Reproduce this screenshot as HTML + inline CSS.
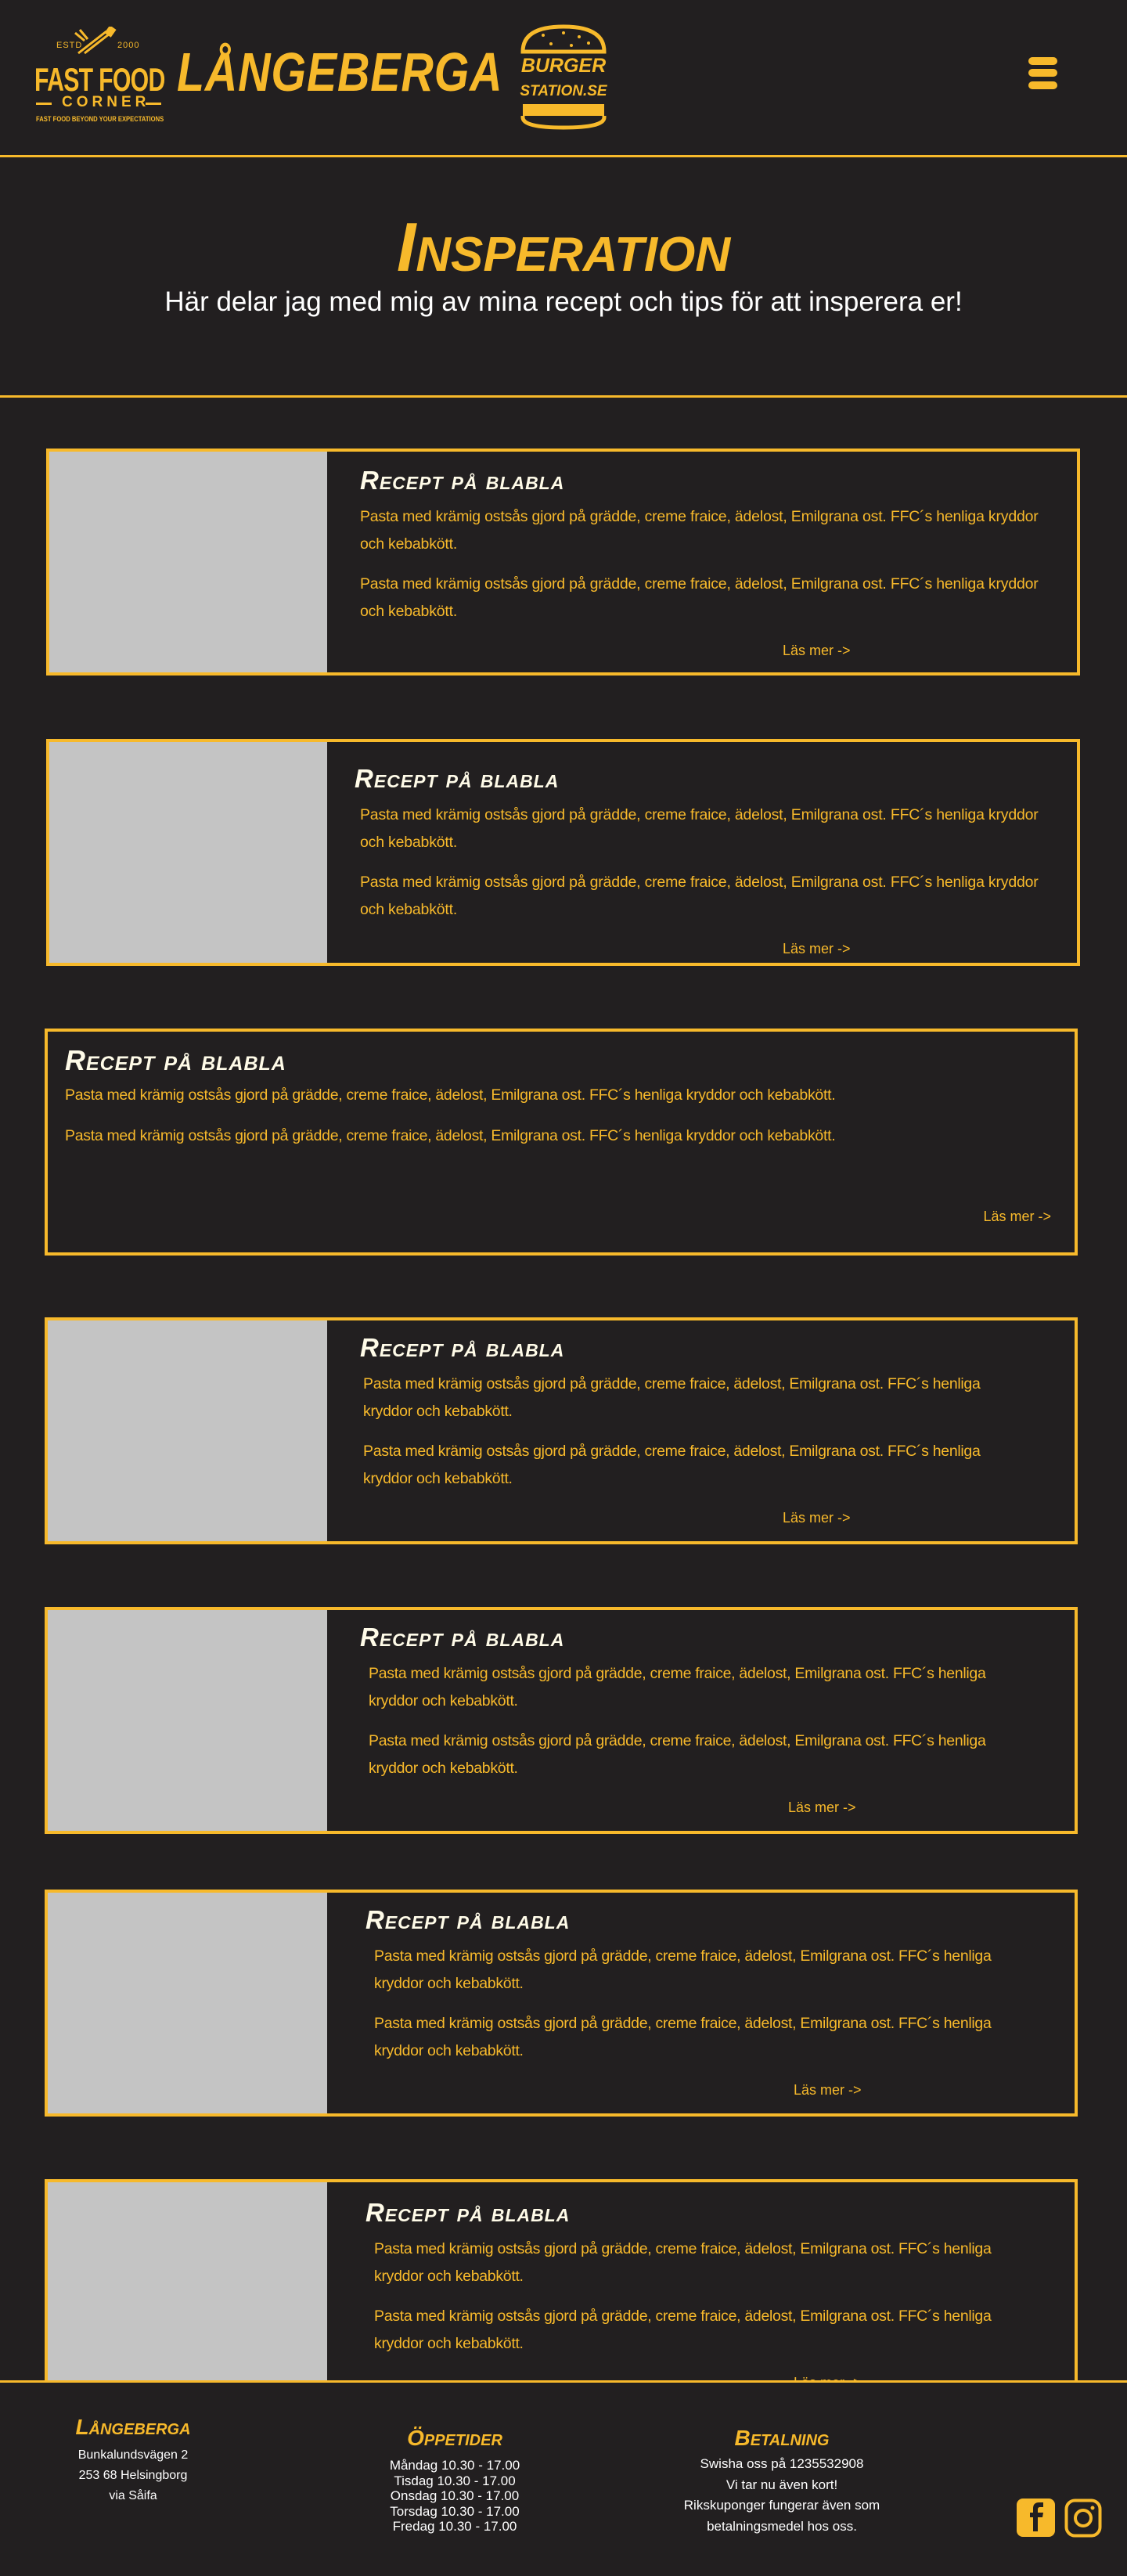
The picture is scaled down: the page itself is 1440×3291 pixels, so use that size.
<!DOCTYPE html>
<html><head><meta charset="utf-8">
<style>
*{margin:0;padding:0;box-sizing:border-box}
body{width:1440px;height:3291px;background:#221f20;position:relative;overflow:hidden;font-family:"Liberation Sans",sans-serif}
.a{position:absolute}
.y{color:#f7b92b}
.hl{position:absolute;left:0;width:1440px;height:3px;background:#f7b92b}
.card{position:absolute;left:59px;width:1321px;height:290px;border:4px solid #f7b92b;overflow:hidden}
.img{position:absolute;left:0;top:0;bottom:0;width:355px;background:#c4c4c4}
.h{position:absolute;color:#fffbe8;font-weight:bold;font-style:italic;font-variant:small-caps;font-size:33px;letter-spacing:1px;white-space:nowrap}
.p{position:absolute;color:#f7b92b;font-size:19.5px;line-height:35px;letter-spacing:-0.3px}
.w1{width:870px;letter-spacing:-0.2px}
.lm{position:absolute;color:#f7b92b;font-size:18px}
.ft{position:absolute;text-align:center;color:#fff;font-size:16px}
.fh{color:#f7b92b;font-weight:bold;font-style:italic;font-variant:small-caps;font-size:28px;margin-bottom:14px}
</style></head><body>

<div class="a y" style="left:72px;top:52px;font-size:11px;letter-spacing:1px">ESTD</div>
<div class="a y" style="left:150px;top:52px;font-size:11px;letter-spacing:1px">2000</div>
<svg class="a" style="left:92px;top:34px" width="60" height="36" viewBox="0 0 60 36"><g stroke="#f7b92b" stroke-width="3" fill="none"><path d="M8 34L44 6M16 34L52 6"/><path d="M4 8l12 10M10 4l10 12"/></g><rect x="44" y="0" width="10" height="12" fill="#f7b92b" transform="rotate(35 49 6)"/></svg>
<div class="a y" style="left:44px;top:78px;font-size:42px;font-weight:bold;transform:scaleX(.72);transform-origin:left;white-space:nowrap;letter-spacing:-1px">FAST FOOD</div>
<div class="a" style="left:46px;top:131px;width:20px;height:3px;background:#f7b92b"></div>
<div class="a" style="left:186px;top:131px;width:20px;height:3px;background:#f7b92b"></div>
<div class="a y" style="left:79px;top:120px;font-size:19px;font-weight:bold;letter-spacing:5px">CORNER</div>
<div class="a y" style="left:46px;top:147px;font-size:9px;font-weight:bold;white-space:nowrap;transform:scaleX(.85);transform-origin:left">FAST FOOD BEYOND YOUR EXPECTATIONS</div>
<div class="a y" style="left:226px;top:52px;font-size:70px;font-weight:bold;font-style:italic;white-space:nowrap;transform:scaleX(.82);transform-origin:left;letter-spacing:1px;line-height:80px">LÅNGEBERGA</div>
<svg class="a" style="left:664px;top:30px" width="112" height="136" viewBox="0 0 112 136"><path d="M4 36 Q4 4 56 4 Q108 4 108 36 L108 36 Z" fill="none" stroke="#f7b92b" stroke-width="5"/><path d="M4 36h104" stroke="#f7b92b" stroke-width="5"/><g fill="#f7b92b"><circle cx="30" cy="15" r="2"/><circle cx="56" cy="12" r="2"/><circle cx="76" cy="17" r="2"/><circle cx="40" cy="26" r="2"/><circle cx="66" cy="28" r="2"/><circle cx="88" cy="25" r="2"/></g><rect x="4" y="103" width="104" height="15" fill="#f7b92b"/><path d="M4 118v2 Q4 133 56 133 Q108 133 108 120v-2" fill="none" stroke="#f7b92b" stroke-width="5"/><text x="56" y="62" text-anchor="middle" font-family="Liberation Sans" font-weight="bold" font-style="italic" font-size="25" fill="#f7b92b">BURGER</text><text x="56" y="92" text-anchor="middle" font-family="Liberation Sans" font-weight="bold" font-style="italic" font-size="19" fill="#f7b92b">STATION.SE</text></svg>
<div class="a" style="left:1314px;top:73px;width:37px;height:10px;border-radius:5px;background:#f7b92b"></div>
<div class="a" style="left:1314px;top:88px;width:37px;height:10px;border-radius:5px;background:#f7b92b"></div>
<div class="a" style="left:1314px;top:104px;width:37px;height:10px;border-radius:5px;background:#f7b92b"></div>

<div class="hl" style="top:198px"></div>
<div class="a y" style="left:0;width:1440px;top:266px;text-align:center;font-size:88px;font-weight:bold;font-style:italic;font-variant:small-caps;line-height:100px">Insperation</div>
<div class="a" style="left:0;width:1440px;top:366px;text-align:center;font-size:35px;color:#fff">Här delar jag med mig av mina recept och tips för att insperera er!</div>
<div class="hl" style="top:505px"></div>

<div class="card" style="top:573px"><div class="img"></div>
<div class="h" style="left:397px;top:18px">Recept på blabla</div>
<div class="p w1" style="left:397px;top:66px">Pasta med krämig ostsås gjord på grädde, creme fraice, ädelost, Emilgrana ost. FFC´s henliga kryddor och kebabkött.</div>
<div class="p w1" style="left:397px;top:152px">Pasta med krämig ostsås gjord på grädde, creme fraice, ädelost, Emilgrana ost. FFC´s henliga kryddor och kebabkött.</div>
<div class="lm" style="left:937px;top:244px">Läs mer -&gt;</div></div>

<div class="card" style="top:944px"><div class="img"></div>
<div class="h" style="left:390px;top:28px">Recept på blabla</div>
<div class="p w1" style="left:397px;top:76px">Pasta med krämig ostsås gjord på grädde, creme fraice, ädelost, Emilgrana ost. FFC´s henliga kryddor och kebabkött.</div>
<div class="p w1" style="left:397px;top:162px">Pasta med krämig ostsås gjord på grädde, creme fraice, ädelost, Emilgrana ost. FFC´s henliga kryddor och kebabkött.</div>
<div class="lm" style="left:937px;top:254px">Läs mer -&gt;</div></div>

<div class="card" style="top:1314px;left:57px;width:1320px">
<div class="h" style="left:22px;top:16px;font-size:36px">Recept på blabla</div>
<div class="p" style="left:22px;top:64px;width:1280px">Pasta med krämig ostsås gjord på grädde, creme fraice, ädelost, Emilgrana ost. FFC´s henliga kryddor och kebabkött.</div>
<div class="p" style="left:22px;top:116px;width:1280px">Pasta med krämig ostsås gjord på grädde, creme fraice, ädelost, Emilgrana ost. FFC´s henliga kryddor och kebabkött.</div>
<div class="lm" style="right:30px;top:226px">Läs mer -&gt;</div></div>

<div class="card" style="top:1683px;left:57px;width:1320px"><div class="img" style="width:357px"></div>
<div class="h" style="left:399px;top:16px">Recept på blabla</div>
<div class="p" style="left:403px;top:64px;width:830px">Pasta med krämig ostsås gjord på grädde, creme fraice, ädelost, Emilgrana ost. FFC´s henliga kryddor och kebabkött.</div>
<div class="p" style="left:403px;top:150px;width:830px">Pasta med krämig ostsås gjord på grädde, creme fraice, ädelost, Emilgrana ost. FFC´s henliga kryddor och kebabkött.</div>
<div class="lm" style="left:939px;top:242px">Läs mer -&gt;</div></div>

<div class="card" style="top:2053px;left:57px;width:1320px"><div class="img" style="width:357px"></div>
<div class="h" style="left:399px;top:16px">Recept på blabla</div>
<div class="p" style="left:410px;top:64px;width:830px">Pasta med krämig ostsås gjord på grädde, creme fraice, ädelost, Emilgrana ost. FFC´s henliga kryddor och kebabkött.</div>
<div class="p" style="left:410px;top:150px;width:830px">Pasta med krämig ostsås gjord på grädde, creme fraice, ädelost, Emilgrana ost. FFC´s henliga kryddor och kebabkött.</div>
<div class="lm" style="left:946px;top:242px">Läs mer -&gt;</div></div>

<div class="card" style="top:2414px;left:57px;width:1320px"><div class="img" style="width:357px"></div>
<div class="h" style="left:406px;top:16px">Recept på blabla</div>
<div class="p" style="left:417px;top:64px;width:830px">Pasta med krämig ostsås gjord på grädde, creme fraice, ädelost, Emilgrana ost. FFC´s henliga kryddor och kebabkött.</div>
<div class="p" style="left:417px;top:150px;width:830px">Pasta med krämig ostsås gjord på grädde, creme fraice, ädelost, Emilgrana ost. FFC´s henliga kryddor och kebabkött.</div>
<div class="lm" style="left:953px;top:242px">Läs mer -&gt;</div></div>

<div class="card" style="top:2784px;left:57px;width:1320px;height:400px"><div class="img" style="width:357px"></div>
<div class="h" style="left:406px;top:20px">Recept på blabla</div>
<div class="p" style="left:417px;top:68px;width:830px">Pasta med krämig ostsås gjord på grädde, creme fraice, ädelost, Emilgrana ost. FFC´s henliga kryddor och kebabkött.</div>
<div class="p" style="left:417px;top:154px;width:830px">Pasta med krämig ostsås gjord på grädde, creme fraice, ädelost, Emilgrana ost. FFC´s henliga kryddor och kebabkött.</div>
<div class="lm" style="left:953px;top:246px">Läs mer -&gt;</div></div>

<div class="a" style="left:0;top:3042px;width:1440px;height:249px;background:#221f20"></div>
<div class="hl" style="top:3041px"></div>
<div class="ft" style="left:70px;width:200px;top:3088px;line-height:26px"><div class="fh" style="margin-bottom:10px">Långeberga</div>Bunkalundsvägen 2<br>253 68 Helsingborg<br>via Såifa</div>
<div class="ft" style="left:481px;width:200px;top:3098px;line-height:19.5px;font-size:17px"><div class="fh" style="line-height:34px;margin-bottom:8px">Öppetider</div>Måndag 10.30 - 17.00<br>Tisdag 10.30 - 17.00<br>Onsdag 10.30 - 17.00<br>Torsdag 10.30 - 17.00<br>Fredag 10.30 - 17.00</div>
<div class="ft" style="left:849px;width:300px;top:3098px;line-height:26.5px;font-size:17px"><div class="fh" style="line-height:34px;margin-bottom:3px">Betalning</div>Swisha oss på 1235532908<br>Vi tar nu även kort!<br>Rikskuponger fungerar även som<br>betalningsmedel hos oss.</div>
<svg class="a" style="left:1299px;top:3192px" width="50" height="50" viewBox="0 0 50 50"><rect width="49" height="49" rx="8" fill="#f7b92b"/><path d="M27 42V24h6l1-6h-7v-4c0-2 1-3 3-3h4V5h-5c-6 0-8 3-8 8v5h-4v6h4v18z" fill="#221f20"/></svg>
<svg class="a" style="left:1360px;top:3192px" width="48" height="50" viewBox="0 0 48 50"><rect x="2.5" y="2.5" width="43" height="45" rx="11" fill="none" stroke="#f7b92b" stroke-width="4"/><circle cx="24" cy="25" r="10" fill="none" stroke="#f7b92b" stroke-width="4"/><circle cx="36" cy="12" r="2.5" fill="#f7b92b"/></svg>
</body></html>
